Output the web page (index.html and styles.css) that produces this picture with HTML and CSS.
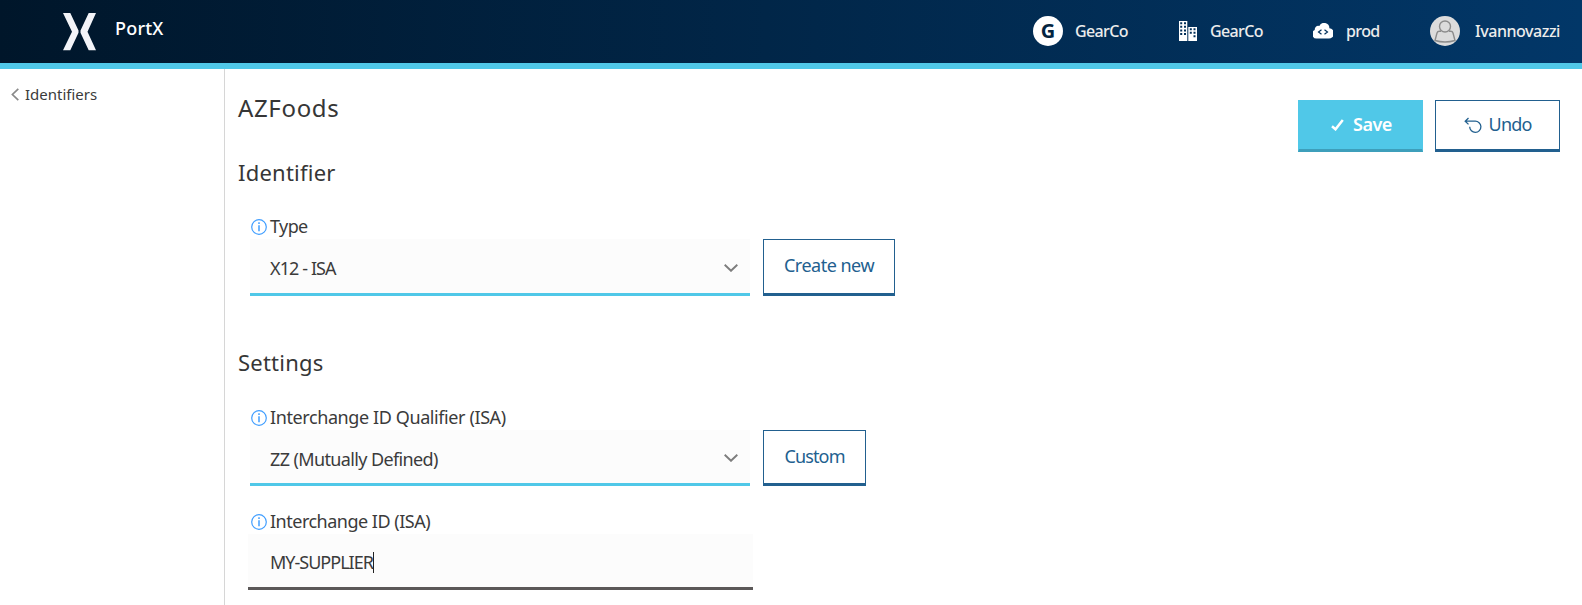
FILE: index.html
```
<!DOCTYPE html>
<html lang="en">
<head>
<meta charset="utf-8">
<title>PortX</title>
<link rel="stylesheet" href="styles.css">
</head>
<body>
<header class="topbar">
  <div class="brand">
    <svg class="logo" width="34" height="38" viewBox="0 0 34 38"><path fill="#f3f4f8" d="M0 0h7.300L15.500 17.500v2.300L7.300 37.300H0L9 18.700zM33 0h-7.300L17.500 17.500v2.300l8.200 17.500H33L24.500 18.700z"/></svg>
    <span class="brand-name">PortX</span>
  </div>
  <nav class="account">
    <div class="account-item"><span class="initial">G</span><span class="gear">GearCo</span></div>
    <div class="account-item item-building">
      <svg width="18" height="20" viewBox="0 0 18 20"><path fill="#fff" fill-rule="evenodd" d="M0 0h8.300v20H0zM1.200 1.200v2h2v-2zM5 1.200v2h2v-2zM1.200 4.800v2h2v-2zM5 4.800v2h2v-2zM1.200 8.400v2h2v-2zM5 8.400v2h2v-2zM1.200 12v2h2v-2zM5 12v2h2v-2zM9.300 6H18v14H9.300zM10.800 7.300v2h2v-2zM14.500 7.300v2h2v-2zM10.800 10.800v2h2v-2zM14.500 10.800v2h2v-2zM14.500 14.300v2h2v-2z"/></svg>
      <span class="gear">GearCo</span>
    </div>
    <div class="account-item item-cloud">
      <svg width="20" height="16" viewBox="0 0 20 16"><path fill="#fff" d="M4.500 15.500A4.500 4.500 0 0 1 1.800 7 3.500 3.500 0 0 1 6.300 3 5.300 5.300 0 0 1 16.400 5.300 5.100 5.100 0 0 1 15.500 15.500z"/><path fill="none" stroke="#04335e" stroke-width="1.200" d="M8.500 6.700 5.500 9l3 2.300M11.500 6.700l3 2.300-3 2.300"/></svg>
      <span class="prod">prod</span>
    </div>
    <div class="account-item item-user">
      <svg width="30" height="30" viewBox="0 0 30 30"><circle cx="15" cy="15" r="15" fill="#dcdcdc"/><g fill="none" stroke="#8c8c8c" stroke-width="1.400"><circle cx="15" cy="10.500" r="5.500"/><path d="M11 15.300H9.300Q7.500 15.300 7 17L5 24.500Q15 27.500 25 24.500L23 17Q22.500 15.300 20.700 15.300H19"/></g></svg>
      <span class="user">Ivannovazzi</span>
    </div>
  </nav>
</header>
<div class="layout">
  <aside class="sidebar">
    <a class="back"><svg width="8" height="13" viewBox="0 0 8 13"><path fill="none" stroke="#8a8a8a" stroke-width="1.700" d="M7.300.8 1.400 6.500l5.900 5.700"/></svg><span>Identifiers</span></a>
  </aside>
  <main class="content">
    <div class="title-row">
      <h1 class="title">AZFoods</h1>
      <div class="actions">
        <button class="btn btn-save"><svg width="13" height="12" viewBox="0 0 13 12"><path fill="none" stroke="#fff" stroke-width="2.500" d="M1 7.300 4.500 10.300 11.800 1"/></svg><span>Save</span></button>
        <button class="btn btn-undo"><svg width="18" height="17" viewBox="0 0 18 17"><path fill="none" stroke="#22608f" stroke-width="1.300" d="M4.500 1 1.200 4.200 4.500 7.400M1.200 4.200H11A5.600 5.600 0 1 1 5.700 9.800"/></svg><span>Undo</span></button>
      </div>
    </div>
    <section class="section">
      <h2 class="heading heading-identifier">Identifier</h2>
      <div class="field">
        <div class="label"><svg class="info" width="16" height="16" viewBox="0 0 16 16"><circle cx="8" cy="8" r="7.300" fill="none" stroke="#409eff" stroke-width="1.200"/><path stroke="#409eff" stroke-width="1.500" d="M8 6.300v6M8 3.300v1.700"/></svg><span class="l-type">Type</span></div>
        <div class="row">
          <div class="select"><span class="v-type">X12 - ISA</span><svg width="14" height="8" viewBox="0 0 14 8"><path fill="none" stroke="#7d7d7d" stroke-width="1.900" d="M.7.800 7 6.800 13.300.8"/></svg></div>
          <button class="btn btn-create">Create new</button>
        </div>
      </div>
    </section>
    <section class="section section-settings">
      <h2 class="heading heading-settings">Settings</h2>
      <div class="field field-qualifier">
        <div class="label"><svg class="info" width="16" height="16" viewBox="0 0 16 16"><circle cx="8" cy="8" r="7.300" fill="none" stroke="#409eff" stroke-width="1.200"/><path stroke="#409eff" stroke-width="1.500" d="M8 6.300v6M8 3.300v1.700"/></svg><span class="l-qual">Interchange ID Qualifier (ISA)</span></div>
        <div class="row">
          <div class="select"><span class="v-qual">ZZ (Mutually Defined)</span><svg width="14" height="8" viewBox="0 0 14 8"><path fill="none" stroke="#7d7d7d" stroke-width="1.900" d="M.7.800 7 6.800 13.300.8"/></svg></div>
          <button class="btn btn-custom">Custom</button>
        </div>
      </div>
      <div class="field field-id">
        <div class="label"><svg class="info" width="16" height="16" viewBox="0 0 16 16"><circle cx="8" cy="8" r="7.300" fill="none" stroke="#409eff" stroke-width="1.200"/><path stroke="#409eff" stroke-width="1.500" d="M8 6.300v6M8 3.300v1.700"/></svg><span class="l-id">Interchange ID (ISA)</span></div>
        <div class="input"><span class="v-id">MY-SUPPLIER</span><i class="caret"></i></div>
      </div>
    </section>
  </main>
</div>
</body>
</html>
```
FILE: styles.css
```
* { box-sizing: border-box; }
body { margin: 0; height: 605px; overflow: hidden; background: #fff; color: #3b3b3b; font: 18px/24px "Noto Sans", sans-serif; font-stretch: 87.5%; }
svg { display: block; flex: none; }
span { white-space: nowrap; }
h1, h2 { margin: 0; font-weight: 400; color: #363636; font-family: "Noto Sans", sans-serif; font-stretch: 100%; }
.topbar { height: 69px; border-bottom: 6px solid #50c8e8; background: linear-gradient(90deg, #00162a, #023768); background-origin: border-box; display: flex; justify-content: space-between; color: #fff; }
.brand { display: flex; padding: 13px 0 0 63px; }
.brand-name { margin-left: 18px; padding-top: 3px; font: 500 18px/24px "Noto Sans", sans-serif; letter-spacing: .2px; }
.account { display: flex; align-items: center; padding: 0 22px 1px 0; font-size: 16px; font-weight: 500; color: #ececec; }
.account-item { display: flex; align-items: center; height: 30px; gap: 12px; }
.initial { width: 30px; height: 30px; border-radius: 50%; background: #fff; color: #04243f; text-align: center; font-size: 20px; line-height: 30px; font-weight: 700; }
.gear { width: 53px; letter-spacing: -.65px; }
.prod { width: 34px; letter-spacing: -.6px; }
.user { width: 85px; letter-spacing: -.45px; }
.item-building { margin-left: 51px; gap: 13px; }
.item-cloud { margin-left: 50px; gap: 13px; }
.item-user { margin-left: 50px; gap: 15px; }
.layout { display: flex; height: 536px; }
.sidebar { width: 225px; flex: none; border-right: 1px solid #d6d6d6; padding: 13px 0 0 11px; }
.back { display: flex; align-items: center; gap: 6px; font-size: 15px; }
.content { flex: 1; padding: 31px 22px 0 13px; }
.title-row { display: flex; justify-content: space-between; height: 57px; }
.title { font-size: 24px; line-height: 32px; margin-top: -8px; letter-spacing: .65px; }
.actions { display: flex; gap: 12px; }
.btn { border: 1px solid #22608f; border-bottom-width: 3px; background: #fff; color: #22608f; padding: 0; margin: 0; font: inherit; display: flex; align-items: center; justify-content: center; letter-spacing: -.5px; }
.actions .btn { width: 125px; height: 52px; }
.btn-save { background: #50c8e8; border-color: #50c8e8; border-bottom-color: #3d9fbb; color: #fff; font-weight: 600; gap: 9px; padding-left: 2px; }
.btn-undo { gap: 7px; letter-spacing: -.85px; }
.actions .btn span { margin-top: -2px; }
.btn-create { width: 132px; padding-bottom: 3px; }
.btn-custom { width: 103px; padding-bottom: 2px; letter-spacing: -.85px; }
.heading { font-size: 22px; line-height: 30px; height: 58px; letter-spacing: .23px; }
.section-settings { padding-top: 51px; }
.heading-settings { height: 59px; }
.field { padding-left: 12px; }
.label { display: flex; align-items: center; height: 24px; gap: 3px; padding-left: 1px; }
.label span { margin-top: -2px; }
.l-type { letter-spacing: -.6px; }
.l-qual { letter-spacing: -.4px; }
.l-id { letter-spacing: -.5px; }
.v-type { letter-spacing: -.9px; }
.v-qual { letter-spacing: -.62px; }
.v-id { letter-spacing: -1px; }
.row { display: flex; gap: 13px; height: 57px; }
.select { width: 500px; display: flex; align-items: center; justify-content: space-between; padding: 4px 12px 0 20px; background: #fcfcfc; border-bottom: 3px solid #50c8e8; }
.select svg { margin-top: -1px; }
.field-qualifier .row { height: 56px; }
.field-id { padding-top: 24px; }
.field-id .label span { margin-top: -3px; }
.input { width: 505px; height: 56px; margin-left: -2px; padding: 3px 0 0 22px; display: flex; align-items: center; background: #fcfcfc; border-bottom: 3px solid #5b5858; }
.caret { width: 1px; height: 21px; background: #222; }
```
